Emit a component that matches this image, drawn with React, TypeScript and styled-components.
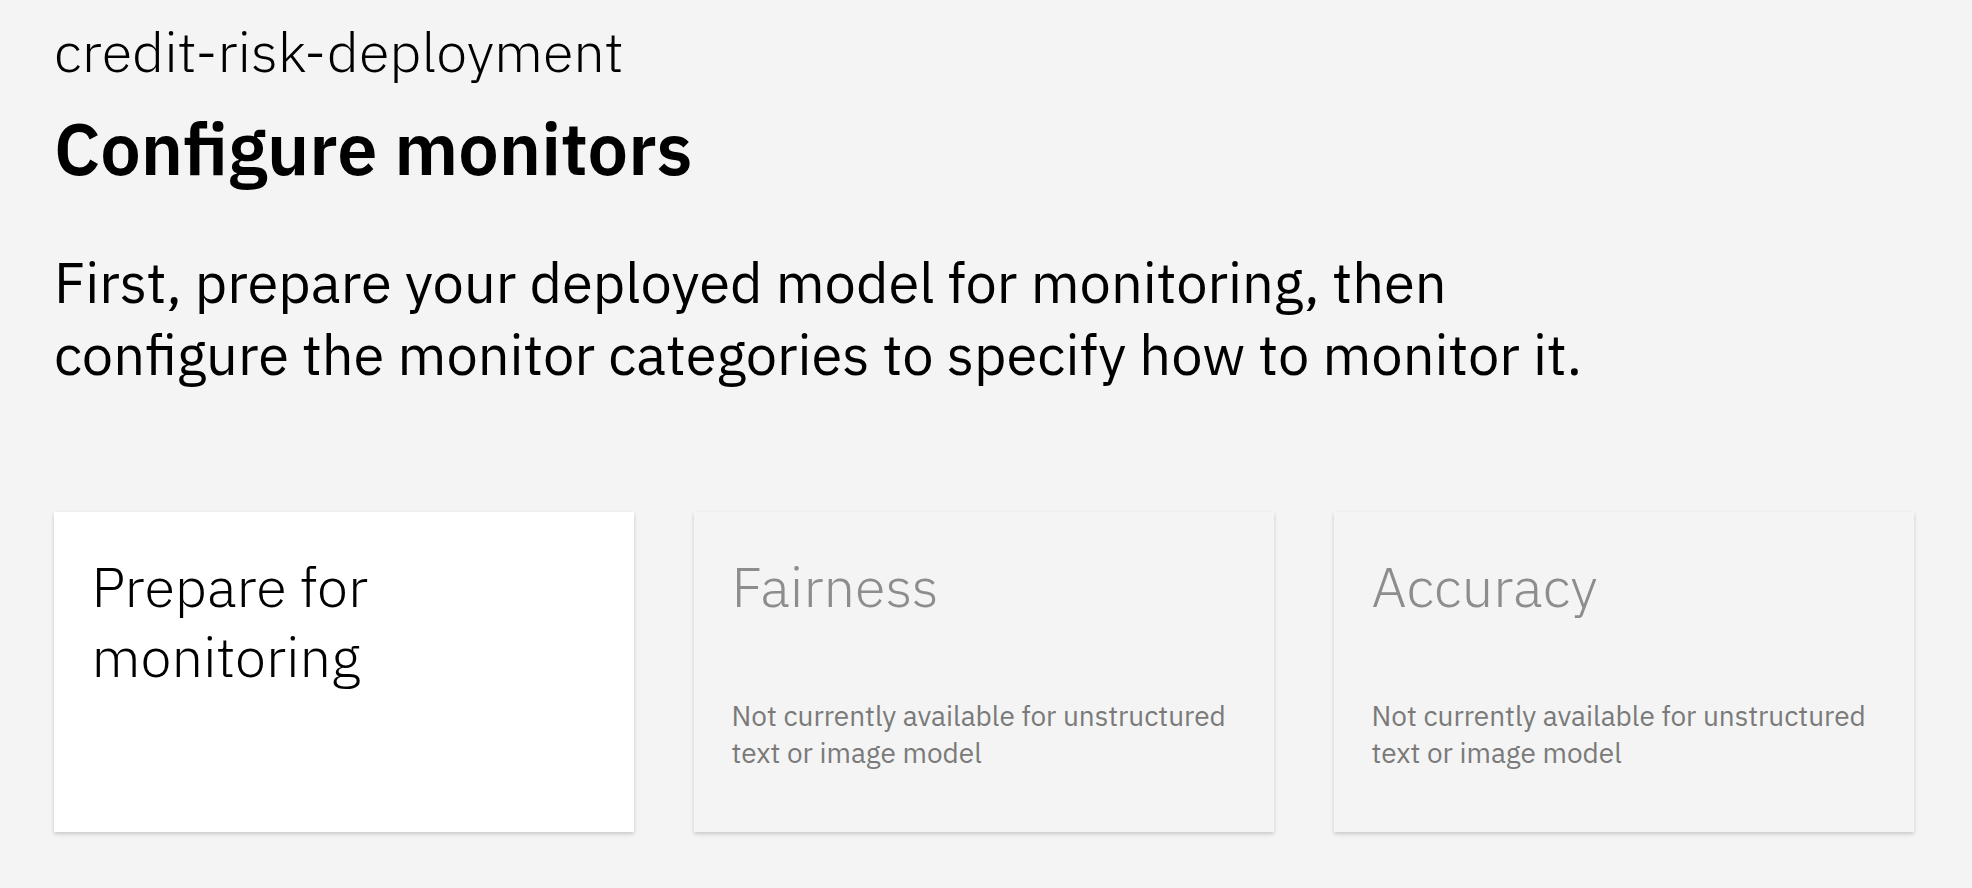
import React from "react";
import styled, { createGlobalStyle } from "styled-components";

const GlobalStyle = createGlobalStyle`
  html, body {
    margin: 0;
    padding: 0;
    background: #f4f4f4;
  }
  body {
    font-family: "IBM Plex Sans", Roboto, "Liberation Sans", sans-serif;
    color: #000000;
  }
  * { box-sizing: border-box; }
`;

const Page = styled.main`
  padding: 18px 54px 40px;
  min-height: 888px;
`;

const DeploymentName = styled.div`
  font-size: 56px;
  font-weight: 300;
  line-height: 66px;
`;

const Heading = styled.h1`
  margin: 20px 0 0;
  font-size: 72px;
  font-weight: 600;
  line-height: 88px;
`;

const Intro = styled.p`
  margin: 54px 0 0;
  max-width: 1560px;
  font-size: 56px;
  font-weight: 400;
  line-height: 72px;
`;

const TileGrid = styled.section`
  display: grid;
  grid-template-columns: repeat(3, 580px);
  gap: 60px;
  margin-top: 122px;
`;

const Tile = styled.div<{ $active?: boolean }>`
  display: flex;
  flex-direction: column;
  height: 320px;
  padding: 38.5px 37.5px 60px;
  background: ${(p) => (p.$active ? "#ffffff" : "#f4f4f4")};
  box-shadow: 0 2px 4px rgba(0, 0, 0, 0.18);
`;

const TileTitle = styled.h2<{ $disabled?: boolean }>`
  margin: 0;
  font-size: 56px;
  font-weight: 300;
  line-height: 70px;
  color: ${(p) => (p.$disabled ? "#8d8d8d" : "#000000")};
`;

const TileNote = styled.p`
  margin: auto 0 0;
  font-size: 28px;
  line-height: 37.7px;
  color: #7a7a7a;
`;

const tiles = [
  { title: "Prepare for monitoring", active: true },
  { title: "Fairness", note: "Not currently available for unstructured text or image model" },
  { title: "Accuracy", note: "Not currently available for unstructured text or image model" },
];

export default function App() {
  return (
    <>
      <GlobalStyle />
      <Page>
        <DeploymentName>credit-risk-deployment</DeploymentName>
        <Heading>Configure monitors</Heading>
        <Intro>
          First, prepare your deployed model for monitoring, then configure the monitor categories to
          specify how to monitor it.
        </Intro>
        <TileGrid>
          {tiles.map((t) => (
            <Tile key={t.title} $active={t.active}>
              <TileTitle $disabled={!t.active}>{t.title}</TileTitle>
              {t.note && <TileNote>{t.note}</TileNote>}
            </Tile>
          ))}
        </TileGrid>
      </Page>
    </>
  );
}
